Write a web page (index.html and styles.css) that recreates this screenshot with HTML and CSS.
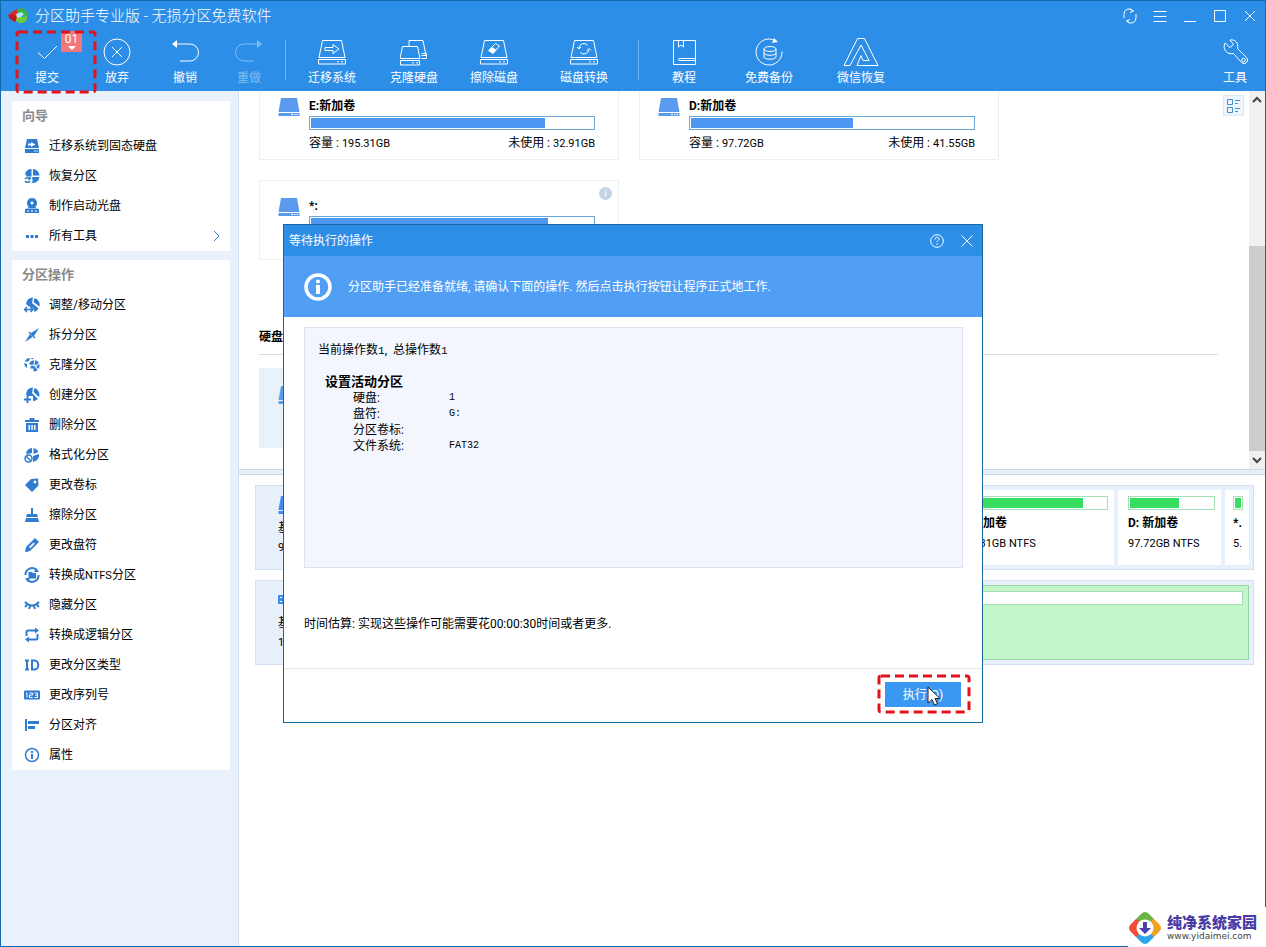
FILE: index.html
```html
<!DOCTYPE html>
<html lang="zh-CN">
<head>
<meta charset="utf-8">
<meta name="viewport" content="width=device-width, initial-scale=1">
<title>分区助手专业版</title>
<link rel="stylesheet" href="styles.css">
</head>
<body>
<svg class="sprite" aria-hidden="true">
  <symbol id="disk-line" viewBox="0 0 28 26"><path d="M4.500 1.500h19l3.500 17H1zM.5 20.500h27v4.500H.5zM19 22.800h2M23 22.800h2"/></symbol>
  <symbol id="drive" viewBox="0 0 22 20"><path d="M3 1h16l2.500 14H.5z"/><path d="M.5 16h21v3H.5z"/><path d="M13 17h2v1h-2zM16 17h1.500v1H16zM18.500 17H20v1h-1.500z" fill="#fff"/></symbol>
  <symbol id="globe" viewBox="0 0 16 16"><path d="M3 4a6.800 6.800 0 0 1 6-3.200l-1 5.700L3 6zM10.300 1a7 7 0 0 1 4.300 3l-4 3.500L9.300 6zM15 5.300a7 7 0 0 1-1 6.500L11.300 8.500zM5 7.500l4 .5 4 4.800A7 7 0 0 1 8 14.800V11H4z"/></symbol>
</svg>

<div class="window">
  <header class="header">
    <div class="titlebar">
      <svg class="logo" viewBox="0 0 20 18"><path d="M1 7l8-5 3 3-3 6-7 1z" fill="#d9262c"/><path d="M0 8l6 0 4 4-3 3-5-3z" fill="#c0181f"/><path d="M9 3c3-3 9-2 10 2s-2 5-5 4l-4-1z" fill="#35b34a"/><path d="M8 12l3-3 5 1 3-2v4c-2 5-8 5-11 2z" fill="#6ecb3b"/><path d="M8 7l5-2 3 2-3 3-4 1z" fill="#b6e3f5"/></svg>
      <h1 class="title">分区助手专业版 - 无损分区免费软件</h1>
      <div class="winbtns">
        <button aria-label="刷新"><svg viewBox="0 0 16 16"><path d="M2 10V6.500A5 5 0 0 1 11 3M14 6v3.500A5 5 0 0 1 5 13M8 .8L11.500 3 8 4.500M8 11.500L4.500 13l3 2.300"/></svg></button>
        <button aria-label="菜单"><svg viewBox="0 0 16 16"><path d="M1.500 3.500h13M1.500 8.500h13M1.500 13.500h13"/></svg></button>
        <button aria-label="最小化"><svg viewBox="0 0 16 16"><path d="M2 13.500h12"/></svg></button>
        <button aria-label="最大化"><svg viewBox="0 0 16 16"><path d="M2.500 2.500h11v11h-11z"/></svg></button>
        <button aria-label="关闭"><svg viewBox="0 0 16 16"><path d="M3 3l10 10M13 3L3 13"/></svg></button>
      </div>
    </div>
    <nav class="toolbar">
      <button class="tool w68">
        <svg viewBox="0 0 28 28"><path d="M5 14.500l6.500 6L24 8"/></svg>提交
        <span class="badge">01<svg viewBox="0 0 8 4"><path d="M0 0h8L4 4z"/></svg></span>
        <svg class="mark mark-tool"><rect x="2" y="2" rx="2"/></svg>
      </button>
      <button class="tool w72"><svg viewBox="0 0 28 28"><circle cx="14" cy="14" r="13"/><path d="M9 9l10 10M19 9L9 19"/></svg>放弃</button>
      <button class="tool w64"><svg viewBox="0 0 28 28"><path d="M3 6h16a8.500 8.500 0 0 1 0 17H9"/><path class="solid" d="M1 6l5-4v8z"/></svg>撤销</button>
      <button class="tool w64" disabled><svg viewBox="0 0 28 28"><path d="M25 6H9a8.500 8.500 0 0 0 0 17h10"/><path class="solid" d="M27 6l-5-4v8z"/></svg>重做</button>
      <span class="sep"></span>
      <button class="tool w84"><svg viewBox="0 0 28 28"><use href="#disk-line" y="1" width="28" height="26"/><path d="M7 9.500h8V6.500l6 4.500-6 4.500v-3H7z"/></svg>迁移系统</button>
      <button class="tool w80"><svg viewBox="0 0 28 28"><path d="M2.500 8.500h15l2.500 12H0zM.5 22.500h19V27H.5zM12 24.800h2M16 24.800h2M9 8V2.500h14l3 15h-4.500M21.500 15.500h5v5h-5"/></svg>克隆硬盘</button>
      <button class="tool w80"><svg viewBox="0 0 28 28"><use href="#disk-line" y="1" width="28" height="26"/><path d="M8.500 12.500l7-7 4 2.500-6.500 7.500z"/><path class="solid" d="M8.500 12.500l3.500-3.500 4.500 3-3.500 3.500z"/></svg>擦除磁盘</button>
      <button class="tool w100"><svg viewBox="0 0 28 28"><use href="#disk-line" y="1" width="28" height="26"/><path d="M9 10a5 5 0 0 1 8.500-3M19 11.500a5 5 0 0 1-8.500 3M7 9l2 2 2-2M17 12.500l2-2 2 2"/></svg>磁盘转换</button>
      <span class="sep"></span>
      <button class="tool w82"><svg viewBox="0 0 28 28"><path d="M3.500 2.500h22v24h-22zM8.500 3v6l2.500-2 2.500 2V3M25 20.500H9a1.500 1.500 0 0 0 0 2h16"/></svg>教程</button>
      <button class="tool w88"><svg viewBox="0 0 28 28"><path d="M20 2.500a13 13 0 1 0 7 11M9 11v8c0 3 12 3 12 0v-8M9 15c0 3 12 3 12 0"/><ellipse cx="15" cy="11" rx="6" ry="2.500"/><path class="solid" d="M19 0l4 4-6 1z"/></svg>免费备份</button>
      <button class="tool w96"><svg class="wide" viewBox="0 0 36 28"><path d="M1 27.500L14.500.5h7L35 27.500H14l4-10 2 5h6L18 7 7 27.500z"/></svg>微信恢复</button>
      <button class="tool w60"><svg viewBox="0 0 28 28"><path d="M4 5l5 4.500 3.500-3L9 2c5-1 9 3 7.500 8.500l9 9a3.500 3.500 0 0 1-5 5l-8-9C6 17 1 11 4 5z"/><circle cx="22.500" cy="22" r="1.800"/></svg>工具</button>
    </nav>
  </header>

  <div class="body">
    <aside class="sidebar">
      <section class="group">
        <h2>向导</h2>
        <a href="#"><svg viewBox="0 0 16 16"><path fill-rule="evenodd" d="M3 1h10l2 9H1zM7 4v1.500H4v2h3V9l4.500-2.500zM1 11h14v4H1zM10 12.500v1h1.500v-1zM12.500 12.500v1H14v-1z"/></svg>迁移系统到固态硬盘</a>
        <a href="#"><svg viewBox="0 0 16 16"><path d="M7.500 1v7.500h-5A4 4 0 0 0 1 6 7 7 0 0 1 7.500 1zM9 1a7 7 0 0 1 6.500 6.500H9zM9 9h6.500A7 7 0 0 1 7.500 15c2-2 1-4 0-5z"/><path class="line" d="M1 11a3 3 0 0 1 5 0M6 13a3 3 0 0 1-5 0M6 9v2H4"/></svg>恢复分区</a>
        <a href="#"><svg viewBox="0 0 16 16"><path fill-rule="evenodd" d="M8 0a5 5 0 0 1 3 9l3 1.500H2L5 9a5 5 0 0 1 3-9zM8 3.500a1.500 1.500 0 1 0 .01 0zM1 11h14v4H1zM3 12.500v1h2v-1zM7 12.500v1h2v-1zM11 12.500v1h2v-1z"/></svg>制作启动光盘</a>
        <a href="#"><svg viewBox="0 0 16 16"><path d="M2 7h3v3H2zM6.500 7h3v3h-3zM11 7h3v3h-3z"/></svg>所有工具<svg class="chev" viewBox="0 0 8 12"><path d="M1 1l5 5-5 5"/></svg></a>
      </section>
      <section class="group">
        <h2>分区操作</h2>
        <a href="#"><svg viewBox="0 0 16 16"><path d="M2 7a7 7 0 0 1 7-6.500L8 6l6.500 5.500A7 7 0 0 1 10 15c1-3-1-5-5-5.500zM10.500 1a7 7 0 0 1 5 8.500L9.500 5z"/><path class="line" d="M1 12.500h7M3 10l-2.500 2.500L3 15M6.500 10L9 12.500 6.500 15"/></svg>调整/移动分区</a>
        <a href="#"><svg viewBox="0 0 16 16"><path d="M7 6l8-5-5 8-2-1zM8.500 10L1 15l5-8z"/><path class="line" d="M5 5l6 6"/></svg>拆分分区</a>
        <a href="#"><svg viewBox="0 0 16 16"><use href="#globe" x="3" y="2" width="13" height="14"/><path d="M1 5a5 5 0 0 1 5-4l-1 3zM0 6l3 1v4a6 6 0 0 1-3-5zM7 1l3 0-2 1.500z"/></svg>克隆分区</a>
        <a href="#"><svg viewBox="0 0 16 16"><path d="M2 7a7 7 0 0 1 7-6.500L8 6l6 6a7 7 0 0 1-5 2V9H3zM10.500 1A7 7 0 0 1 15 10L9.500 5z"/><path class="line bold" d="M0 12.500h7M3.500 9v7"/></svg>创建分区</a>
        <a href="#"><svg viewBox="0 0 16 16"><path fill-rule="evenodd" d="M5.500 1h5v2H15v2H1V3h4.500zM2 6h12v9H2zM4.500 8v5H6V8zM7.300 8v5h1.500V8zM10 8v5h1.500V8z"/></svg>删除分区</a>
        <a href="#"><svg viewBox="0 0 16 16"><path d="M2 6a7 7 0 0 1 6-5v5l-5 1zM9.500 1a7 7 0 0 1 5 4l-5 2zM15 7a7 7 0 0 1-6 8V9z"/><circle class="line" cx="4.500" cy="11.500" r="3.500"/><path class="line" d="M2 9l5 5"/></svg>格式化分区</a>
        <a href="#"><svg viewBox="0 0 16 16"><path fill-rule="evenodd" d="M1 8l6-6 7-.5.500 7L8 15zM11 3.500a1.500 1.500 0 1 0 .01 0z"/></svg>更改卷标</a>
        <a href="#"><svg viewBox="0 0 16 16"><path d="M7 1h2v6h4l1 3H2l1-3h4zM2 11h12l1 4H1z"/></svg>擦除分区</a>
        <a href="#"><svg viewBox="0 0 16 16"><path fill-rule="evenodd" d="M11 1l4 4-9 9-5 1.200L2 10zM9.500 5.500L5 10l1.200 1.200L10.700 6.700z"/></svg>更改盘符</a>
        <a href="#"><svg viewBox="0 0 16 16"><path class="line bold" d="M1.500 8A6.500 6.500 0 0 1 13 3.500M14.500 8A6.500 6.500 0 0 1 3 12.500"/><path d="M4.500 5H8l1 1h3v5.500H4.500zM12 1l3 4h-5zM4 15l-3-4h5z"/></svg><span>转换成<small>NTFS</small>分区</span></a>
        <a href="#"><svg viewBox="0 0 16 16"><path class="line bold" d="M1 5c4 4.500 10 4.500 14 0M3 8l-2 2M6 9l-1 3M10 9l1 3M13 8l2 2"/></svg>隐藏分区</a>
        <a href="#"><svg viewBox="0 0 16 16"><path class="line bold" d="M2.500 9V5q0-1.500 1.500-1.500h8M13.500 7v4q0 1.500-1.500 1.500H4"/><path d="M11 .5l4 3-4 3zM5 9.500l-4 3 4 3z"/></svg>转换成逻辑分区</a>
        <a href="#"><svg viewBox="0 0 16 16"><path class="line bold" d="M1 3.500h4M3 3.500v9M1 12.500h4M8 3.500h2.500c5 0 5 9 0 9H8z"/></svg>更改分区类型</a>
        <a href="#"><svg viewBox="0 0 16 16"><rect y="3.500" width="16" height="9" rx="1"/><path d="M2 6h1v4.500M5.500 6h3v2h-3v2.500h3M10.500 6h3v4.500h-3M11 8.200h2.500" fill="none" stroke="#fff"/></svg>更改序列号</a>
        <a href="#"><svg viewBox="0 0 16 16"><path d="M1 2h2v12H1zM4 4h11v3H4zM4 9h7v3H4z"/></svg>分区对齐</a>
        <a href="#"><svg viewBox="0 0 16 16"><circle class="line" cx="8" cy="8" r="6.500"/><path d="M7 7h2v5H7zM7 4h2v2H7z"/></svg>属性</a>
      </section>
    </aside>

    <main class="main">
      <div class="pane-top">
        <div class="volumes">
          <div class="cards">
            <article class="card">
              <svg class="drive"><use href="#drive"/></svg>
              <div class="info"><h3>E:新加卷</h3><div class="bar"><i style="width:83%"></i></div>
                <p><span>容量 : <small>195.31GB</small></span><span>未使用 : <small>32.91GB</small></span></p></div>
            </article>
            <article class="card">
              <svg class="drive"><use href="#drive"/></svg>
              <div class="info"><h3>D:新加卷</h3><div class="bar"><i style="width:57.500%"></i></div>
                <p><span>容量 : <small>97.72GB</small></span><span>未使用 : <small>41.55GB</small></span></p></div>
            </article>
            <article class="card">
              <svg class="drive"><use href="#drive"/></svg>
              <div class="info"><h3>*:</h3><div class="bar"><i style="width:84%"></i></div></div>
              <span class="tip">i</span>
            </article>
          </div>
          <h2 class="disk-head">硬盘2</h2>
          <div class="cards">
            <article class="card selected"><svg class="drive"><use href="#drive"/></svg></article>
          </div>
        </div>
        <button class="view" aria-label="视图"><svg viewBox="0 0 16 16"><path d="M1.500 1.500h5v5h-5zM1.500 9.500h5v5h-5zM9 2.500h5M9 5.500h3M9 10.500h5M9 13.500h3"/></svg></button>
        <div class="scroll">
          <button aria-label="向上"><svg viewBox="0 0 10 8"><path d="M1 6l4-4 4 4"/></svg></button>
          <div class="track"><div class="thumb"></div></div>
          <button aria-label="向下"><svg viewBox="0 0 10 8"><path d="M1 2l4 4 4-4"/></svg></button>
        </div>
      </div>
      <div class="splitter"></div>
      <div class="pane-bottom">
        <section class="disk">
          <div class="disk-info"><svg class="drive"><use href="#drive"/></svg><span>基本</span><small>931.51GB</small></div>
          <div class="part large"><div class="gbar"><i style="width:84%"></i></div><b>E: 新加卷</b><small>195.31GB NTFS</small></div>
          <div class="part medium"><div class="gbar"><i style="width:59%"></i></div><b>D: 新加卷</b><small>97.72GB NTFS</small></div>
          <div class="part tiny"><div class="gbar"><i style="width:100%"></i></div><b>*.</b><small>5.</small></div>
        </section>
        <section class="disk">
          <div class="disk-info"><svg class="drive" viewBox="0 0 22 20"><path d="M0 5h6v9H0zM6 3h15v13H6z"/><path d="M2 7h2v1H2zM2 11h2v1H2z" fill="#fff"/></svg><span>基本</span><small>14.65GB</small></div>
          <div class="part active"><div class="gbar"></div></div>
        </section>
      </div>
    </main>
  </div>

  <div class="overlay">
    <section class="dialog" role="dialog" aria-labelledby="dlg-title">
      <div class="dlg-title"><h2 id="dlg-title">等待执行的操作</h2>
        <button aria-label="帮助"><svg viewBox="0 0 16 16"><circle cx="8" cy="8" r="6.300"/><path d="M6 6.500c0-3 4-2.800 4-.5 0 1.500-2 1.500-2 3.200M8 10.500V12"/></svg></button>
        <button aria-label="关闭"><svg viewBox="0 0 16 16"><path d="M2.500 2.500l11 11M13.500 2.500l-11 11"/></svg></button>
      </div>
      <div class="banner">
        <svg viewBox="0 0 28 28"><circle cx="14" cy="14" r="12" fill="none" stroke="#fff" stroke-width="3.500"/><circle cx="14" cy="8.500" r="2" fill="#fff"/><path d="M12 12h4v9h-4z" fill="#fff"/></svg>
        <p>分区助手已经准备就绪, 请确认下面的操作. 然后点击执行按钮让程序正式地工作.</p>
      </div>
      <div class="content">
        <div class="ops">
          <p>当前操作数<span>1</span>, &nbsp;总操作数<span>1</span></p>
          <h3>设置活动分区</h3>
          <dl>
            <dt>硬盘:</dt><dd>1</dd>
            <dt>盘符:</dt><dd>G:</dd>
            <dt>分区卷标:</dt><dd></dd>
            <dt>文件系统:</dt><dd>FAT32</dd>
          </dl>
        </div>
        <p class="estimate">时间估算: 实现这些操作可能需要花00:00:30时间或者更多.</p>
      </div>
      <div class="dlg-foot">
        <button class="run">执行(O)
          <svg class="mark mark-run"><rect x="2" y="2" rx="2"/></svg>
          <svg class="cursor" viewBox="0 0 14 20"><path d="M1 1v16l4-3.500L7.500 19l3-1.300L8 12.500h5z"/></svg>
        </button>
      </div>
    </section>
  </div>

  <div class="brand">
    <svg viewBox="0 0 32 32"><path d="M16 0q2 0 4 2l5 5q-2 4-9 4T7 7l5-5q2-2 4-2z" fill="#6bb345"/><path d="M32 16q0 2-2 4l-5 5q-4-2-4-9t4-9l5 5q2 2 2 4z" fill="#f5a21b"/><path d="M16 32q-2 0-4-2l-5-5q2-4 9-4t9 4l-5 5q-2 2-4 2z" fill="#2fa5e8"/><path d="M0 16q0-2 2-4l5-5q4 2 4 9t-4 9l-5-5q-2-2-2-4z" fill="#ee4c34"/><circle cx="16" cy="16" r="8.500" fill="#fff"/><path d="M14 10h4v6h4l-6 6-6-6h4z" fill="#4b3fb0"/></svg>
    <div><strong>纯净系统家园</strong><span>www.yidaimei.com</span></div>
  </div>
</div>
</body>
</html>
```

FILE: styles.css
```css
* { box-sizing: border-box; }

body {
  margin: 0;
  font: 12px/18px Roboto, "Noto Sans CJK SC", sans-serif;
  color: #000;
}

h1, h2, h3, p, dl, dd { margin: 0; font-size: inherit; }
small { font-size: 11px; }
a { color: inherit; text-decoration: none; }
button {
  padding: 0;
  border: 0;
  background: none;
  color: inherit;
  font: inherit;
}
.sprite { position: absolute; width: 0; height: 0; }

.window {
  position: relative;
  display: flex;
  flex-direction: column;
  height: 100vh;
  border: 1px solid #1268ae;
  background: #fff;
}

/* header */
.header { background: #2d8ee8; color: #fff; }
.titlebar { display: flex; align-items: center; height: 30px; padding-left: 7px; }
.logo { width: 20px; height: 18px; margin-right: 7px; }
.title { flex: 1; font-size: 15px; font-weight: 300; }
.winbtns { display: flex; }
.winbtns button, .dlg-title button {
  display: grid;
  place-items: center;
  width: 30px;
  height: 30px;
}
.winbtns svg, .dlg-title svg {
  width: 16px;
  height: 16px;
  fill: none;
  stroke: #fff;
  stroke-width: 1;
}

.toolbar { display: flex; height: 60px; padding-left: 12px; }
.tool {
  position: relative;
  display: flex;
  flex-direction: column;
  align-items: center;
  gap: 3px;
  padding-top: 7px;
}
.tool > svg:first-child {
  width: 28px;
  height: 28px;
  fill: none;
  stroke: #fff;
  stroke-width: 1;
}
.tool > svg.wide:first-child { width: 36px; }
.tool .solid { fill: #fff; stroke: none; }
.tool:disabled { opacity: .4; }
.w60 { width: 60px; margin-left: auto; }
.w64 { width: 64px; }
.w68 { width: 68px; }
.w72 { width: 72px; }
.w80 { width: 80px; }
.w82 { width: 82px; }
.w84 { width: 84px; }
.w88 { width: 88px; }
.w96 { width: 96px; }
.w100 { width: 100px; }
.sep { width: 1px; height: 40px; margin: 9px 4px; background: #6fb3f2; }
.badge {
  position: absolute;
  top: 0;
  left: 48px;
  width: 21px;
  height: 21px;
  background: #f2777a;
  line-height: 16px;
  text-align: center;
}
.badge svg { display: block; width: 8px; height: 4px; margin: -1px auto 0; fill: #fff; }

.mark { position: absolute; z-index: 1; pointer-events: none; }
.mark rect {
  width: calc(100% - 4px);
  height: calc(100% - 4px);
  fill: none;
  stroke: #e3131b;
  stroke-width: 3;
  stroke-dasharray: 9 5;
}
.mark-tool { top: -1px; left: 2px; width: 82px; height: 64px; }
.mark-run { top: -8px; left: -8px; width: 94px; height: 40px; }

/* sidebar */
.body { display: flex; flex: 1; min-height: 0; }
.sidebar {
  flex: 0 0 238px;
  display: flex;
  flex-direction: column;
  gap: 9px;
  padding: 10px 8px 0 11px;
  border-right: 1px solid #cfdff0;
  background: #e9f2fc;
}
.group { background: #fff; }
.group h2 {
  padding-left: 10px;
  color: #8a8a8a;
  font-size: 13px;
  line-height: 30px;
}
.group a {
  display: flex;
  align-items: center;
  gap: 9px;
  height: 30px;
  padding: 0 9px 0 12px;
}
.group svg { width: 16px; height: 16px; fill: #2f7cd0; }
.group .line { fill: none; stroke: #2f7cd0; stroke-width: 1.500; }
.group .bold { stroke-width: 2; }
.group .chev { width: 8px; height: 12px; margin-left: auto; fill: none; stroke: #2f7cd0; }

/* volumes */
.main { flex: 1; display: flex; flex-direction: column; min-width: 0; }
.pane-top { flex: 9 1 0; display: flex; min-height: 0; overflow: hidden; }
.volumes { flex: 1; min-width: 0; margin-top: -11px; padding-left: 20px; }
.cards { display: grid; grid-template-columns: repeat(auto-fill, 360px); gap: 20px; }
.card {
  position: relative;
  display: flex;
  gap: 9px;
  height: 80px;
  padding: 16px 23px 0 18px;
  border: 1px solid #ebeef2;
}
.selected { border-color: #e9f2fb; background: #e9f2fb; }
.drive { flex: none; width: 22px; height: 20px; fill: #5b9bee; }
.info { flex: 1; }
.info h3 { font-weight: 700; }
.bar {
  height: 14px;
  margin: 1px 0 4px;
  padding: 1px;
  border: 1px solid #6ba6d8;
}
.bar i, .gbar i { display: block; height: 100%; background: #4d96f2; }
.info p { display: flex; justify-content: space-between; }
.tip {
  position: absolute;
  top: 6px;
  right: 6px;
  width: 13px;
  height: 13px;
  border-radius: 50%;
  background: #c3d3e6;
  color: #fff;
  font-size: 10px;
  line-height: 13px;
  text-align: center;
}
.disk-head {
  margin: 66px 0 13px;
  padding-bottom: 6px;
  border-bottom: 1px solid #dcdcdc;
  line-height: 22px;
}
.view {
  display: grid;
  place-items: center;
  width: 21px;
  height: 21px;
  margin: 4px 5px;
  border: 1px solid #dbe8f5;
  background: #eef5fc;
}
.view svg { width: 16px; height: 16px; fill: none; stroke: #3d8fd0; }
.scroll {
  flex: 0 0 16px;
  display: flex;
  flex-direction: column;
  background: #f0f0f0;
}
.scroll button { height: 18px; }
.scroll svg { width: 10px; height: 8px; fill: none; stroke: #444; stroke-width: 2; }
.track { flex: 1; display: flex; align-items: flex-end; }
.thumb { width: 100%; height: 60%; background: #cdcdcd; }
.splitter {
  height: 6px;
  border: solid #cbd9e9;
  border-width: 1px 0;
  background: #e6eef9;
}

/* disk map */
.pane-bottom {
  flex: 11 1 0;
  display: flex;
  flex-direction: column;
  gap: 10px;
  min-height: 0;
  padding: 10px 11px 0 16px;
}
.disk {
  display: flex;
  gap: 4px;
  padding: 4px;
  border: 1px solid #d3e0f0;
  background: #e7f0fb;
}
.disk-info { flex: 1; display: flex; flex-direction: column; padding: 5px 0 0 18px; }
.disk-info .drive { margin-bottom: 4px; fill: #3f8bee; }
.disk-info span { margin-bottom: 2px; }
.part {
  display: flex;
  flex-direction: column;
  height: 75px;
  padding: 6px 6px 0 10px;
  background: #fff;
  white-space: nowrap;
  overflow: hidden;
}
.part b { margin: 4px 0 3px; }
.large { width: 166px; }
.medium { width: 103px; }
.tiny { width: 24px; padding-left: 8px; }
.active {
  width: 700px;
  padding-top: 5px;
  padding-right: 5px;
  border: 1px solid #93d3a6;
  background: #c3f6c8;
}
.gbar { height: 14px; padding: 1px; border: 1px solid #a5dfb5; background: #fff; }
.gbar i { background: #37dd5f; }

/* dialog */
.overlay {
  position: absolute;
  inset: 0;
  display: grid;
  place-items: center;
}
.dialog {
  width: min(700px, 100%);
  border: 1px solid #17689f;
  background: #fff;
}
.dlg-title {
  display: flex;
  align-items: center;
  height: 31px;
  padding-left: 5px;
  background: #2d8ee8;
  color: #fff;
}
.dlg-title h2 { flex: 1; font-weight: 400; }
.banner {
  display: flex;
  align-items: center;
  gap: 16px;
  height: 61px;
  padding-left: 20px;
  background: #519ff5;
  color: #fff;
}
.banner svg { width: 28px; height: 28px; }
.content { padding: 10px 19px 35px 20px; }
.ops {
  min-height: 241px;
  padding: 14px 13px;
  border: 1px solid #dae2ee;
  background: #f3f7fd;
  line-height: 16px;
}
.ops h3 { margin-top: 15px; padding-left: 7px; font-size: 13px; }
.ops dl { display: grid; grid-template-columns: 96px 1fr; padding-left: 35px; }
.ops dt, .ops dd { height: 16px; }
.ops dd, .ops p span { font-family: "Liberation Mono", monospace; font-size: 10px; }
.ops p span { font-size: 11px; }
.estimate { margin-top: 47px; }
.dlg-foot {
  display: flex;
  justify-content: flex-end;
  padding: 13px 21px 15px;
  border-top: 1px solid #e2e6ea;
}
.run {
  position: relative;
  width: 76px;
  height: 25px;
  background: #3a97f2;
  color: #fff;
}
.cursor {
  position: absolute;
  top: 4px;
  left: 42px;
  width: 14px;
  height: 20px;
  fill: #fff;
  stroke: #222;
}

/* brand plate */
.brand {
  position: absolute;
  right: -1px;
  bottom: -1px;
  display: flex;
  align-items: center;
  gap: 6px;
  height: 40px;
  padding: 2px 9px 0 1px;
  background: #fff;
}
.brand svg { width: 32px; height: 32px; }
.brand strong, .brand span { display: block; }
.brand strong { color: #4b3ba6; font-size: 15px; font-weight: 900; line-height: 16px; }
.brand span { color: #444; font: 9px/10px "DejaVu Sans", sans-serif; }
```
